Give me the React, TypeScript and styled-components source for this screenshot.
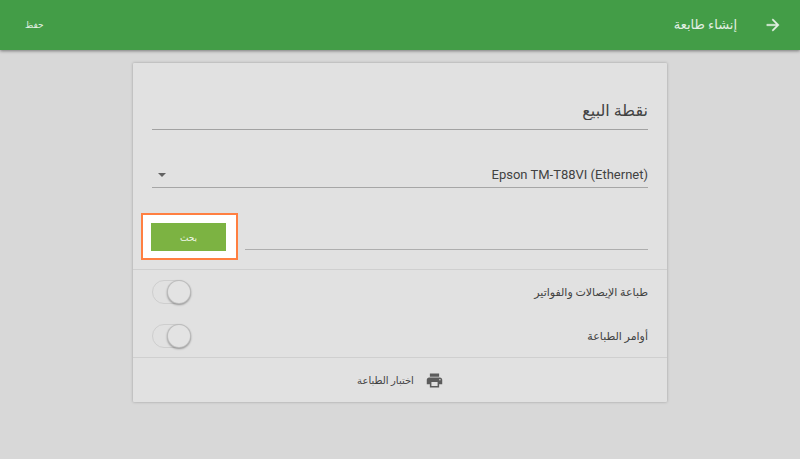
import React, { useState } from "react";
import styled, { createGlobalStyle } from "styled-components";

const GlobalStyle = createGlobalStyle`
  *, *::before, *::after { box-sizing: border-box; }
  body {
    margin: 0;
    background: #d8d8d8;
    color: #424242;
    font-family: Roboto, "DejaVu Sans", sans-serif;
  }
  button, input, select { font-family: inherit; color: inherit; }
`;

const Page = styled.div`
  min-height: 100vh;
`;

const Toolbar = styled.header`
  display: flex;
  align-items: center;
  height: 50px;
  padding: 0 20px;
  background: #439d47;
  color: #e2efe2;
  box-shadow: 0 1px 3px rgba(0, 0, 0, 0.45);
`;

const BarButton = styled.button`
  display: flex;
  align-items: center;
  padding: 0;
  border: 0;
  background: none;
  color: inherit;
  font-size: 9px;
  line-height: 16px;
  cursor: pointer;
`;

const Title = styled.h1`
  flex: 1;
  margin: 0 29px 0 0;
  font-size: 13px;
  line-height: 24px;
  font-weight: 400;
`;

const SaveButton = styled(BarButton)`
  margin-left: 5px;
`;

const Card = styled.form`
  width: calc(100% - 32px);
  max-width: 534px;
  margin: 13px auto 24px;
  background: #e1e1e1;
  border-radius: 1px;
  box-shadow: 0 0 3px rgba(0, 0, 0, 0.28);
`;

const Fields = styled.section`
  display: flex;
  flex-direction: column;
  padding: 32px 19px 9px;
`;

const NameInput = styled.input`
  width: 100%;
  height: 35px;
  padding: 0 0 4px;
  border: 0;
  border-bottom: 1px solid #a2a2a2;
  border-radius: 0;
  background: none;
  outline: none;
  font-size: 16px;
`;

const SelectBox = styled.div`
  display: grid;
  align-items: center;
  margin-top: 32px;
  border-bottom: 1px solid #a6a6a6;
`;

const ModelSelect = styled.select`
  grid-area: 1 / 1;
  width: 100%;
  height: 25px;
  padding: 0;
  border: 0;
  background: none;
  outline: none;
  appearance: none;
  font-size: 13px;
`;

const Caret = styled.svg`
  grid-area: 1 / 1;
  justify-self: end;
  margin-left: 6px;
  pointer-events: none;
`;

const SearchRow = styled.div`
  display: flex;
  gap: 7px;
  margin: 25px 0 0 -11px;
`;

const AddressInput = styled.input`
  flex: 1;
  min-width: 0;
  height: 37px;
  padding: 0;
  border: 0;
  border-bottom: 1px solid #aeaeae;
  border-radius: 0;
  background: none;
  outline: none;
  font-size: 13px;
`;

const Highlight = styled.div`
  padding: 8px 10px 7px 8px;
  border: 2px solid #ff7f41;
  background: #fff;
`;

const SearchButton = styled.button`
  display: block;
  width: 75px;
  height: 28px;
  padding: 2px 0 0;
  border: 0;
  background: #7cb342;
  color: #f1f7ea;
  font-size: 9px;
  cursor: pointer;
`;

const Options = styled.section`
  display: grid;
  gap: 1px;
  border-top: 1px solid #cfcfcf;
  border-bottom: 1px solid #cfcfcf;
`;

const OptionRow = styled.label`
  display: flex;
  align-items: center;
  justify-content: space-between;
  height: 43px;
  padding: 1px 19px 0;
  font-size: 11px;
  cursor: pointer;
`;

const Switch = styled.input`
  appearance: none;
  display: flex;
  width: 39px;
  height: 24px;
  margin: 0;
  border: 1px solid #cecece;
  border-radius: 12px;
  background: #e1e1e1;
  direction: rtl;
  cursor: pointer;

  &::before {
    content: "";
    width: 22px;
    height: 22px;
    border-radius: 50%;
    background: #e3e3e3;
    box-shadow: 0 0 0 1px #bdbdbd, 0 1px 2px 1px rgba(0, 0, 0, 0.35);
  }

  &:checked {
    direction: ltr;
    background: #7cb342;
  }
`;

const TestButton = styled.button`
  display: flex;
  align-items: center;
  justify-content: center;
  gap: 12px;
  width: 100%;
  height: 44px;
  padding: 0;
  border: 0;
  background: none;
  font-size: 10px;
  cursor: pointer;
`;

const options = ["طباعة الإيصالات والفواتير", "أوامر الطباعة"];

function OptionSwitch({ label }: { label: string }) {
  const [on, setOn] = useState(false);
  return (
    <OptionRow>
      <span>{label}</span>
      <Switch type="checkbox" checked={on} onChange={(e) => setOn(e.target.checked)} />
    </OptionRow>
  );
}

export default function App() {
  return (
    <Page dir="rtl" lang="ar">
      <GlobalStyle />
      <Toolbar>
        <BarButton type="button" aria-label="رجوع">
          <svg width="14" height="14" viewBox="3 3 18 18" fill="currentColor" stroke="currentColor" strokeWidth="0.5" aria-hidden="true">
            <path d="M12 4l-1.41 1.41L16.17 11H4v2h12.17l-5.58 5.59L12 20l8-8z" />
          </svg>
        </BarButton>
        <Title>إنشاء طابعة</Title>
        <SaveButton type="submit" form="printer">حفظ</SaveButton>
      </Toolbar>
      <Card id="printer" onSubmit={(e) => e.preventDefault()}>
        <Fields>
          <NameInput aria-label="الاسم" defaultValue="نقطة البيع" />
          <SelectBox>
            <ModelSelect aria-label="طراز الطابعة">
              <option>Epson TM-T88VI (Ethernet)</option>
            </ModelSelect>
            <Caret width="8" height="4" viewBox="0 0 8 4" fill="#626262" aria-hidden="true">
              <path d="M0 0h8L4 4z" />
            </Caret>
          </SelectBox>
          <SearchRow>
            <AddressInput aria-label="عنوان الطابعة" />
            <Highlight>
              <SearchButton type="button">بحث</SearchButton>
            </Highlight>
          </SearchRow>
        </Fields>
        <Options>
          {options.map((label) => (
            <OptionSwitch key={label} label={label} />
          ))}
        </Options>
        <TestButton type="button">
          <svg width="17" height="17" viewBox="1 1 22 22" fill="#5c5c5c" aria-hidden="true">
            <path d="M19 8H5c-1.66 0-3 1.34-3 3v6h4v4h12v-4h4v-6c0-1.66-1.34-3-3-3zm-3 11H8v-5h8v5zm3-7c-.55 0-1-.45-1-1s.45-1 1-1 1 .45 1 1-.45 1-1 1zm-1-9H6v4h12V3z" />
          </svg>
          <span>اختبار الطباعة</span>
        </TestButton>
      </Card>
    </Page>
  );
}
